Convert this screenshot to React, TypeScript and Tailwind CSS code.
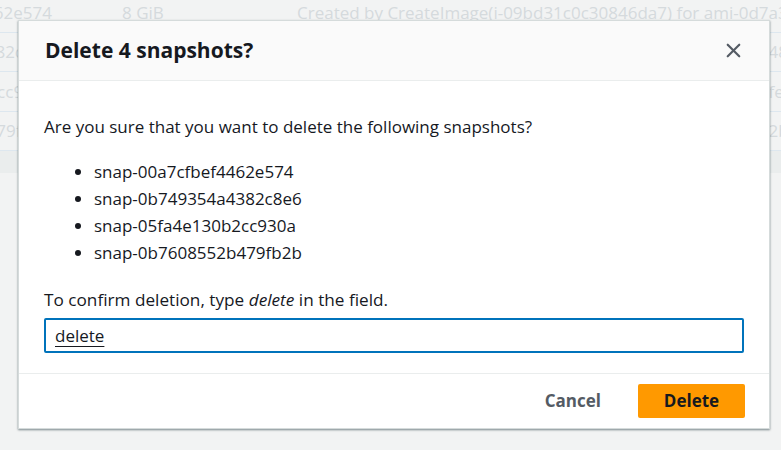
import { X } from "lucide-react";

const rows = [
  { id: "snap-00a7cfbef4462e574", size: "8 GiB", desc: "Created by CreateImage(i-09bd31c0c30846da7) for ami-0d7a3c5e91f2b8d40" },
  { id: "snap-0b749354a4382c8e6", size: "8 GiB", desc: "Created by CreateImage(i-09bd31c0c30846da7) for ami-0d748c0e27f" },
  { id: "snap-05fa4e130b2cc930a", size: "8 GiB", desc: "Created by CreateImage(i-09bd31c0c30846da7) for ami-0d7fe51a9c" },
  { id: "snap-0b7608552b479fb2b", size: "8 GiB", desc: "Created by CreateImage(i-09bd31c0c30846da7) for ami-0d72b9e41" },
];

const snapshots = rows.map((r) => r.id);

const App = () => {
  return (
    <div className="relative w-[781px] h-[450px] overflow-hidden bg-[#f2f3f3] font-['Open_Sans',sans-serif]">
      {/* faded table behind the modal */}
      <div className="mt-[-7px]">
        {rows.map((r) => (
          <div
            key={r.id}
            className="flex items-center h-[39.5px] border-b border-[#dde7ef] text-[17px] text-[#d5dadd] whitespace-nowrap"
          >
            <div className="w-[52px] flex justify-end overflow-visible shrink-0">
              <span>{r.id}</span>
            </div>
            <div className="w-[70px] shrink-0"></div>
            <div className="w-[175px] shrink-0">{r.size}</div>
            <div>{r.desc}</div>
          </div>
        ))}
        <div className="h-[22px] bg-[#eaeded]"></div>
      </div>

      {/* modal */}
      <div className="absolute left-[18px] top-[20px] w-[752px] bg-white border border-[#d5dbdb] shadow-[0_1px_2px_rgba(0,28,36,0.5)]">
        <div className="h-[60px] bg-[#fafafa] border-b border-[#eaeded] flex items-center justify-between pl-[26px] pr-[24px]">
          <h2 className="text-[21px] font-bold text-[#16191f]">
            Delete 4 snapshots?
          </h2>
          <X size={23} strokeWidth={2.3} className="text-[#545b64]" />
        </div>

        <div className="pt-[35px] pb-[20px] px-[25px] text-[17px] text-[#16191f]">
          <p className="leading-[22px]">
            Are you sure that you want to delete the following snapshots?
          </p>
          <ul className="mt-[20px] pl-[50px] list-disc leading-[27px] marker:text-[#16191f]">
            {snapshots.map((s) => (
              <li key={s}>{s}</li>
            ))}
          </ul>
          <p className="mt-[23px] leading-[22px] text-[17.2px]">
            To confirm deletion, type <i>delete</i> in the field.
          </p>
          <div className="mt-[7px] h-[35px] border-2 border-[#0073bb] rounded-[2px] flex items-center pl-[9px]">
            <span className="underline underline-offset-[4px] decoration-1">
              delete
            </span>
          </div>
        </div>

        <div className="border-t border-[#eaeded] flex items-center justify-end gap-[37px] pt-[10px] pb-[10px] pr-[24px]">
          <button className="text-[17px] font-bold text-[#545b64]">Cancel</button>
          <button className="w-[107px] h-[34px] bg-[#ff9900] rounded-[2px] text-[17px] font-bold text-[#16191f]">
            Delete
          </button>
        </div>
      </div>
    </div>
  );
};

export default App;
